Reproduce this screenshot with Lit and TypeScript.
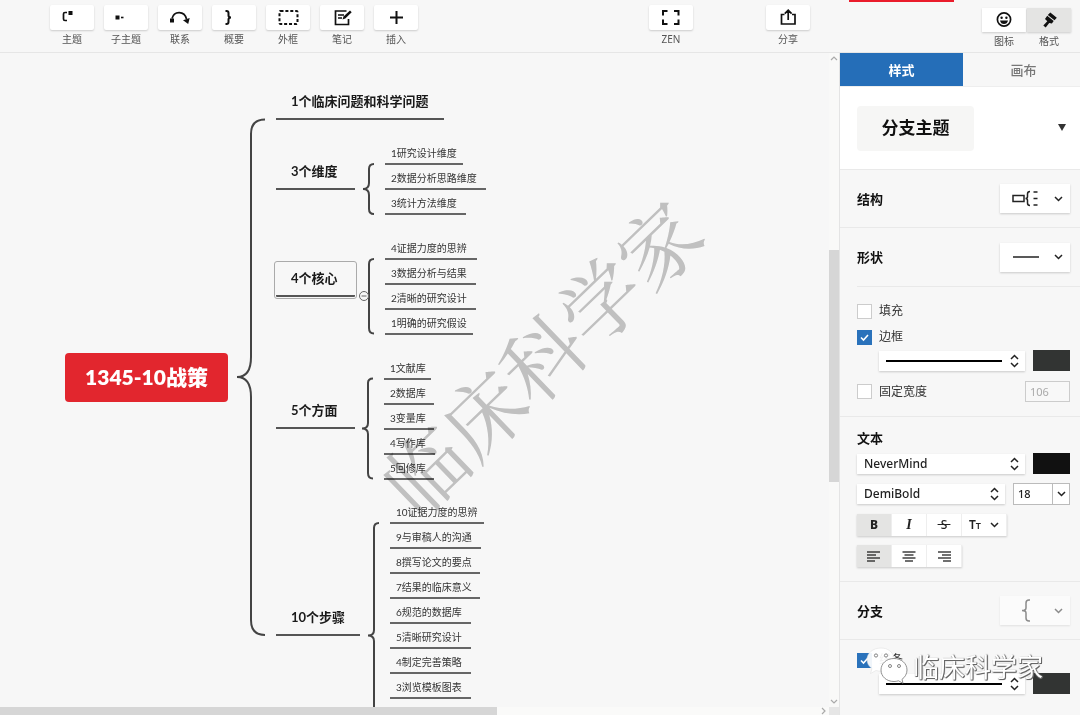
import { LitElement, html, svg, css, TemplateResult } from "lit";
import { customElement, state } from "lit/decorators.js";
import { classMap } from "lit/directives/class-map.js";
import { styleMap } from "lit/directives/style-map.js";

interface Topic {
  text: string;
  x: number;
  line: number;
  width: number;
}

const branches: (Topic & { selected?: boolean })[] = [
  { text: "1个临床问题和科学问题", x: 276, line: 120, width: 168 },
  { text: "3个维度", x: 276, line: 190, width: 79 },
  { text: "4个核心", x: 276, line: 297, width: 79, selected: true },
  { text: "5个方面", x: 276, line: 429, width: 79 },
  { text: "10个步骤", x: 276, line: 636, width: 84 },
];

const column = (x: number, first: number, items: [string, number][]): Topic[] =>
  items.map(([text, width], i) => ({ text, x, width, line: first + i * 25 }));

const leaves: Topic[] = [
  ...column(385, 164, [
    ["1研究设计维度", 78],
    ["2数据分析思路维度", 101],
    ["3统计方法维度", 81],
  ]),
  ...column(385, 259, [
    ["4证据力度的思辨", 92],
    ["3数据分析与结果", 91],
    ["2清晰的研究设计", 91],
    ["1明确的研究假设", 88],
  ]),
  ...column(384, 379, [
    ["1文献库", 47],
    ["2数据库", 50],
    ["3变量库", 50],
    ["4写作库", 51],
    ["5回修库", 50],
  ]),
  ...column(390, 523, [
    ["10证据力度的思辨", 94],
    ["9与审稿人的沟通", 91],
    ["8撰写论文的要点", 90],
    ["7结果的临床意义", 90],
    ["6规范的数据库", 81],
    ["5清晰研究设计", 81],
    ["4制定完善策略", 81],
    ["3浏览模板图表", 81],
  ]),
];

const toolIcons: Record<string, TemplateResult> = {
  topic: svg`<path d="M17 7.500h-2q-1.500 0-1.500 1.500v5q0 1.500 1.500 1.500h2" class="s"/><rect x="18.500" y="6" width="4" height="4"/>`,
  sub: svg`<rect x="11.500" y="10.500" width="4" height="4"/><rect x="17" y="11.700" width="2.500" height="1.600"/>`,
  link: svg`<path d="M14 13.500C16 5.500 26.500 5.500 28.500 14" class="s"/><rect x="12" y="13.500" width="4" height="4"/><path d="M25 15.200l6.700-2.200-1.500 6z"/>`,
  brace: svg`<path d="M13.500 6h1q2 0 2 2v2.500q0 2 2.500 2q-2.500 0-2.500 2v2.500q0 2-2 2h-1" class="s w"/>`,
  frame: svg`<rect x="13.500" y="6" width="18" height="13" rx="1" class="s w" stroke-dasharray="3 1.900"/>`,
  note: svg`<path d="M26.500 6H15.500v13.500H28.500V14M18 10h6M18 13h4" class="s"/><path d="M22.500 14.500l1-3 6.500-6 1.700 1.700-6.400 6.300z"/>`,
  plus: svg`<path d="M22.500 6v13M16 12.500h13" class="s w"/>`,
  zen: svg`<path d="M18.500 6h-4.500v4.500M25 6h4.500v4.500M29.500 14.500v4.500h-4.500M18.500 19h-4.500v-4.500" class="s w"/>`,
  share: svg`<path d="M18.500 9.500h-3v9.500h13.500v-9.500h-3M22.200 15V5.500M18.800 8.600l3.400-3.400 3.400 3.400" class="s"/>`,
  face: svg`<circle cx="22" cy="11.500" r="6.600" class="s"/><circle cx="19.600" cy="9.700" r="1.200"/><circle cx="24.400" cy="9.700" r="1.200"/><path d="M18 12.500h8q-.8 3.600-4 3.600t-4-3.600z"/>`,
  brush: svg`<path d="M23.300 4.500l6.500 5.300-2.300 2.500-6.700-5.300zM20.200 7.700l6.500 5.400-1.800 2.500-2.700-.6-3.500 4.500-2.400-2 4-4.200-2.300-2.300z"/>`,
};

const chevron = html`<svg class="chevron" viewBox="0 0 9 6" width="9" height="6"><path d="M1 1l3.500 3.500L8 1" /></svg>`;
const updown = html`<svg class="updown" viewBox="0 0 9 14" width="9" height="14"><path d="M1 5l3.500-3.500L8 5M1 9l3.500 3.500L8 9" /></svg>`;
const swatchLine = html`<svg class="line" height="2" width="116"><rect width="116" height="2" /></svg>`;

@customElement("tool-button")
class ToolButton extends LitElement {
  static properties = { icon: {}, label: {}, variant: {} };
  declare icon: string;
  declare label: string;
  declare variant: string;

  static styles = css`
    :host { display: block; }
    button {
      display: flex; flex-direction: column; align-items: center;
      padding: 0; border: 0; background: none; color: #555;
      font: 10px/18px "Noto Sans", "Noto Sans CJK SC", sans-serif;
    }
    .box { display: block; width: 44px; height: 25px; border-radius: 2px; background: #fff; box-shadow: 0 1px 2px #0000002e; }
    .joined { border-radius: 0; height: 24px; }
    .on { background: #e4e4e3; }
    svg { display: block; fill: #111; }
    .s { fill: none; stroke: #111; stroke-width: 1.7; }
    .w { stroke-width: 2; }
  `;

  render() {
    const boxes = { box: true, joined: !!this.variant, on: this.variant === "on" };
    return html`<button type="button">
      <span class=${classMap(boxes)}><svg viewBox="0 0 44 25" width="44" height="25">${toolIcons[this.icon]}</svg></span>
      <span>${this.label}</span>
    </button>`;
  }
}

@customElement("mind-map")
class MindMap extends LitElement {
  static styles = css`
    :host {
      display: grid; grid-template: minmax(0, 1fr) 8px / minmax(0, 1fr) 10px;
      min-width: 0; min-height: 0; background: #f7f7f7;
      font-family: Lato, "Noto Sans CJK SC", sans-serif;
    }
    .stage { position: relative; overflow: hidden; }
    .map { position: absolute; left: 0; top: -53px; }
    .lines { position: absolute; left: 0; top: 0; fill: none; stroke: #444; stroke-width: 2; }
    .leaf, .branch { position: absolute; box-sizing: border-box; white-space: nowrap; }
    .leaf { height: 20px; margin-top: -19px; padding-left: 6px; border-bottom: 2px solid #666; font-size: 10px; line-height: 16px; color: #333; }
    .branch { height: 31px; margin-top: -31px; padding-left: 15px; border-bottom: 2px solid #555; font-size: 13px; line-height: 24px; font-weight: 700; color: #1a1a1a; }
    .selected { height: 34px; margin-top: -34px; padding-top: 3px; outline: 1px solid #aaa; outline-offset: 1px; border-radius: 1px; }
    .root {
      position: absolute; left: 65px; top: 353px; width: 163px; height: 49px; border-radius: 4px;
      background: #e2262e; color: #fff; text-align: center; font-size: 21px; line-height: 48px; font-weight: 800; white-space: nowrap;
    }
    .dot { fill: #f7f7f7; stroke: #666; stroke-width: 1; }
    .mark {
      position: absolute; left: 337px; top: 300px; width: 405px; text-align: center; white-space: nowrap;
      transform: rotate(-44deg); font: 400 81px/110px "Noto Serif CJK SC", "Noto Sans CJK SC", serif;
      color: #c6c6c6; mix-blend-mode: multiply; pointer-events: none;
    }
    .vbar { display: flex; flex-direction: column; align-items: center; justify-content: space-between; background: #f9f9f8; }
    .vbar .thumb { width: 10px; height: 232px; background: #d6d6d6; margin-bottom: 29px; }
    .vbar .thumb { margin-bottom: 0; margin-top: 0; }
    .vbar .track { flex: 1; display: flex; flex-direction: column; justify-content: center; padding-bottom: 28px; }
    .hbar { display: flex; align-items: center; justify-content: space-between; background: #fafaf9; }
    .hbar .thumb { width: 60%; height: 8px; background: #d6d6d6; }
    .corner { background: #e6e6e6; }
    .arrow { fill: none; stroke: #aaa; stroke-width: 1.2; }
  `;

  private place(t: Topic) {
    return styleMap({ left: `${t.x}px`, top: `${t.line}px`, width: `${t.width}px` });
  }

  render() {
    return html`
      <div class="stage">
        <div class="map">
          <svg class="lines" width="830" height="760">
            <path d="M265 119.500C256 119.500 251 124 251 134V357C251 369 247 377 237 377C247 377 251 385 251 397V620C251 630 256 635 265 635" />
            <path d="M374 164Q369 164 369 169V183Q369 189 363 189Q369 189 369 195V209Q369 214 374 214" />
            <path d="M374 259Q369 259 369 264V328Q369 333.500 374 333.500" />
            <path d="M373 378.500Q368 378.500 368 383V423Q368 428.500 362 428.500Q368 428.500 368 434V473Q368 478.500 373 478.500" />
            <path d="M379 523Q374 523 374 528V630Q374 635.500 368 635.500Q374 635.500 374 641V760" />
            <circle class="dot" cx="364" cy="296" r="4.500" />
            <path class="dot" d="M361.500 296h5" />
          </svg>
          <div class="root">1345-10战策</div>
          ${branches.map((b) => html`<div class=${classMap({ branch: true, selected: !!b.selected })} style=${this.place(b)}>${b.text}</div>`)}
          ${leaves.map((l) => html`<div class="leaf" style=${this.place(l)}>${l.text}</div>`)}
          <div class="mark">临床科学家</div>
        </div>
      </div>
      <div class="vbar">
        <svg class="arrow" width="8" height="10"><path d="M1 7l3-3 3 3" /></svg>
        <div class="track"><div class="thumb"></div></div>
        <svg class="arrow" width="8" height="10"><path d="M1 3l3 3 3-3" /></svg>
      </div>
      <div class="hbar">
        <div class="thumb"></div>
        <svg class="arrow" width="8" height="8"><path d="M1 1l3 3-3 3" /></svg>
      </div>
      <div class="corner"></div>
    `;
  }
}

@customElement("style-panel")
class StylePanel extends LitElement {
  @state() private fill = false;

  static styles = css`
    :host {
      display: block; position: relative; overflow: hidden; background: #f7f7f7; box-sizing: border-box;
      border-left: 1px solid #e4e4e4; color: #222;
      font: 12px/16px "Noto Sans", "Noto Sans CJK SC", sans-serif;
    }
    * { box-sizing: border-box; }
    button, select, input { font: inherit; color: inherit; margin: 0; padding: 0; border: 0; border-radius: 0; }
    .tabs { display: grid; grid-template-columns: 123px 1fr; height: 34px; border-bottom: 1px solid #eee; }
    .tab { background: none; font-size: 13px; font-weight: 500; color: #777; padding-left: 4px; }
    .tab.active { background: #256eb8; color: #fff; font-weight: 700; padding: 0; }
    .preset { display: flex; align-items: center; justify-content: space-between; height: 83px; padding: 0 13px 0 17px; background: #fff; border-bottom: 1px solid #e9e9e9; }
    .preset .name { width: 117px; height: 45px; border-radius: 4px; background: #f6f6f5; font-size: 17px; font-weight: 700; color: #111; }
    .more { width: 10px; height: 20px; background: none; }
    .row { display: flex; align-items: center; justify-content: space-between; height: 58px; padding: 0 10px 0 17px; }
    .ruled { border-bottom: 1px solid #e9e9e9; }
    h2 { margin: 0; font-size: 13px; line-height: 18px; font-weight: 700; color: #111; }
    .pick { display: grid; align-items: center; background: #fff; box-shadow: 0 1px 2px #00000030; }
    .pick > * { grid-area: 1 / 1; }
    .pick select { width: 100%; height: 100%; appearance: none; background: none; padding-left: 7px; }
    .pick svg { pointer-events: none; }
    .small { width: 70px; height: 29px; }
    .small .art { margin-left: 12px; }
    .faded { opacity: 0.5; }
    .chevron { justify-self: end; margin-right: 7px; }
    .updown { justify-self: end; margin-right: 6px; }
    .chevron, .updown, .art { fill: none; stroke: #222; stroke-width: 1.5; }
    .line { margin-left: 7px; fill: #000; }
    .group { display: flex; flex-direction: column; padding: 16px 10px 0 0; margin-left: 17px; }
    .shape { border-top: 1px solid #e9e9e9; height: 130px; }
    .check { display: flex; align-items: center; gap: 7px; height: 16px; color: #333; }
    .check + .check { margin-top: 10px; }
    .check input { appearance: none; width: 15px; height: 15px; border: 1px solid #ccc; background: #fff; }
    .check input:checked {
      border-color: #2a72bb;
      background: #2a72bb url("data:image/svg+xml,%3Csvg xmlns='http://www.w3.org/2000/svg' viewBox='0 0 13 13'%3E%3Cpath d='M3 6.500l2.500 2.500 4.500-5' fill='none' stroke='white' stroke-width='1.600'/%3E%3C/svg%3E");
    }
    .pair { display: flex; align-items: center; justify-content: space-between; gap: 8px; }
    .pair .pick { flex: 1; height: 20px; }
    .indent { padding-left: 22px; margin-top: 5px; }
    .swatch { width: 37px; height: 21px; background: #323433; }
    .ink { background: #111; }
    .fixed { margin-top: 10px; }
    .width { width: 45px; height: 21px; border: 1px solid #ccc; background: #f8f8f8; color: #aaa; font-size: 11px; padding-left: 4px; }
    .text { padding-top: 12px; height: 166px; margin-left: 0; padding-left: 17px; border-top: 1px solid #e9e9e9; border-bottom: 1px solid #e9e9e9; }
    .face { font-weight: 500; font-size: 12px; margin-top: 6px; }
    .weight { margin-top: 9px; }
    .pair .size { flex: none; width: 57px; height: 22px; border: 1px solid #bbb; box-shadow: none; }
    .size select { padding-left: 4px; font-size: 11px; }
    .size .chevron { margin-right: 3px; }
    .size::after { content: ""; grid-area: 1 / 1; height: 20px; margin-right: 16px; border-right: 1px solid #bbb; pointer-events: none; }
    .seg { display: grid; grid-template-columns: 35px 35px 35px 45px; align-self: flex-start; height: 22px; margin-top: 9px; background: #fff; box-shadow: 0 1px 2px #00000030; }
    .seg button { display: flex; align-items: center; justify-content: center; background: none; border-right: 1px solid #eee; font-size: 12px; }
    .seg .on { background: #e4e4e3; }
    .seg.three { grid-template-columns: 35px 35px 35px; }
    .seg .bold { font-weight: 800; }
    .seg .italic { font-family: "Liberation Serif", serif; font-style: italic; font-size: 14px; font-weight: 700; }
    .strike { text-decoration: line-through; font-weight: 500; }
    .caps { gap: 9px; font-weight: 600; }
    .caps .chevron { margin: 0; }
    .caps small { font-size: 9px; }
    .bars { stroke: #222; stroke-width: 1.3; }
    .tail { padding-top: 12px; }
    .badge { position: absolute; left: 26px; top: 594px; display: flex; align-items: center; gap: 5px; white-space: nowrap; pointer-events: none; }
    .badge span {
      font: 26px/38px "Noto Sans CJK SC", sans-serif; color: #fff;
      text-shadow: 1px 1px 0 #666, 1px 0 1px #777, 0 1px 1px #888;
    }
  `;

  private barsIcon(widths: number[], align: number) {
    return html`<svg class="bars" width="14" height="13">
      ${widths.map((w, i) => {
        const x = (14 - w) * align;
        return svg`<path d=${`M${x} ${2 + i * 3}h${w}`} />`;
      })}
    </svg>`;
  }

  private lineSelect(label: string) {
    return html`<div class="pick">
      <select aria-label=${label}><option value="solid"></option></select>${swatchLine}${updown}
    </div>`;
  }

  render() {
    return html`
      <div class="tabs">
        <button class="tab active" type="button">样式</button>
        <button class="tab" type="button">画布</button>
      </div>
      <div class="preset">
        <button class="name" type="button">分支主题</button>
        <button class="more" type="button" aria-label="更多"><svg width="10" height="8"><path d="M1 0h8L5 7z" fill="#333" /></svg></button>
      </div>
      <div class="row ruled">
        <h2>结构</h2>
        <div class="pick small">
          <select aria-label="结构"><option value="brace"></option></select>
          <svg class="art" width="28" height="17"><rect x="1" y="5.500" width="11" height="6" /><path d="M18 1.500q-2.500 0-2.500 2.500v2.500q0 2-2 2q2 0 2 2v2.500q0 2.500 2.500 2.500M21.500 2h4M21.500 8.500h4M21.500 15h4" /></svg>
          ${chevron}
        </div>
      </div>
      <div class="row">
        <h2>形状</h2>
        <div class="pick small">
          <select aria-label="形状"><option value="underline"></option></select>
          <svg class="art" width="28" height="4"><path d="M1 2h26" /></svg>
          ${chevron}
        </div>
      </div>
      <div class="group shape">
        <label class="check"><input type="checkbox" .checked=${this.fill} @change=${() => (this.fill = !this.fill)} />填充</label>
        <label class="check"><input type="checkbox" checked />边框</label>
        <div class="pair indent">${this.lineSelect("边框线")}<button class="swatch" type="button" aria-label="边框颜色"></button></div>
        <div class="pair fixed">
          <label class="check"><input type="checkbox" />固定宽度</label>
          <input class="width" aria-label="宽度" value="106" disabled />
        </div>
      </div>
      <div class="group text">
        <h2>文本</h2>
        <div class="pair face">
          <div class="pick"><select aria-label="字体"><option>NeverMind</option></select>${updown}</div>
          <button class="swatch ink" type="button" aria-label="文本颜色"></button>
        </div>
        <div class="pair face weight">
          <div class="pick"><select aria-label="字重"><option>DemiBold</option></select>${updown}</div>
          <div class="pick size"><select aria-label="字号"><option>18</option></select>${chevron}</div>
        </div>
        <div class="seg">
          <button class="on bold" type="button">B</button>
          <button class="italic" type="button">I</button>
          <button class="strike" type="button">&nbsp;S&nbsp;</button>
          <button class="caps" type="button"><span>T<small>T</small></span>${chevron}</button>
        </div>
        <div class="seg three">
          <button class="on" type="button" aria-label="左对齐">${this.barsIcon([13, 9, 13, 8], 0)}</button>
          <button type="button" aria-label="居中">${this.barsIcon([13, 9, 13, 8], 0.5)}</button>
          <button type="button" aria-label="右对齐">${this.barsIcon([13, 9, 13, 8], 1)}</button>
        </div>
      </div>
      <div class="row ruled">
        <h2>分支</h2>
        <div class="pick small faded">
          <select aria-label="分支"><option value="brace"></option></select>
          <svg class="art" width="28" height="23"><path d="M18 1h-1q-3 0-3 3v5q0 2.500-4 2.500q4 0 4 2.500v5q0 3 3 3h1" /></svg>
          ${chevron}
        </div>
      </div>
      <div class="group tail">
        <label class="check"><input type="checkbox" checked />线条</label>
        <div class="pair indent">${this.lineSelect("线条")}<button class="swatch" type="button" aria-label="线条颜色"></button></div>
      </div>
      <div class="badge">
        <svg width="42" height="38" viewBox="0 0 42 38">
          <path d="M15 1C7 1 1 6 1 12.500c0 4 2 7 5 9l-1.500 5 5.500-3c2 .6 4 .8 6 .7C28 23 30 16 28 10 26 4 21 1 15 1z" fill="#fff" fill-opacity=".93" stroke="#ddd" stroke-width=".5" />
          <path d="M28 11.500c-7.500 0-13 5-13 11.500s5.500 11.500 13 11.500c1.500 0 3-.3 4.500-.7l4.500 2.500-1-4c3-2 5-5.500 5-9.300 0-6.500-5.500-11.500-13-11.500z" fill="#fff" stroke="#777" stroke-width=".8" />
          <g fill="#fff" stroke="#777" stroke-width=".9"><circle cx="10" cy="8.500" r="1.600" /><circle cx="20" cy="8.500" r="1.600" /><circle cx="24" cy="19" r="1.500" /><circle cx="33" cy="19" r="1.500" /></g>
        </svg>
        <span>临床科学家</span>
      </div>
    `;
  }
}

const tools = [
  ["topic", "主题"],
  ["sub", "子主题"],
  ["link", "联系"],
  ["brace", "概要"],
  ["frame", "外框"],
  ["note", "笔记"],
  ["plus", "插入"],
];

@customElement("app-root")
class AppRoot extends LitElement {
  static styles = css`
    :host { display: grid; grid-template: 53px minmax(0, 1fr) / minmax(0, 1fr) 241px; height: 100vh; overflow: hidden; background: #f7f7f7; }
    header { grid-column: 1 / -1; position: relative; display: flex; padding: 5px 9px 0 50px; box-sizing: border-box; border-bottom: 1px solid #e6e6e6; }
    .tools { display: flex; gap: 10px; flex: 1; }
    .share { margin-left: 73px; }
    .views { display: flex; margin-left: 172px; padding-top: 3px; gap: 1px; }
    .alert { position: absolute; top: 0; right: 126px; width: 105px; height: 2px; background: #ea1c2b; }
  `;

  render() {
    return html`
      <header>
        <div class="tools">${tools.map(([icon, label]) => html`<tool-button .icon=${icon} .label=${label}></tool-button>`)}</div>
        <tool-button .icon=${"zen"} .label=${"ZEN"}></tool-button>
        <tool-button class="share" .icon=${"share"} .label=${"分享"}></tool-button>
        <div class="views">
          <tool-button .icon=${"face"} .label=${"图标"} .variant=${"off"}></tool-button>
          <tool-button .icon=${"brush"} .label=${"格式"} .variant=${"on"}></tool-button>
        </div>
        <div class="alert"></div>
      </header>
      <mind-map></mind-map>
      <style-panel></style-panel>
    `;
  }
}
